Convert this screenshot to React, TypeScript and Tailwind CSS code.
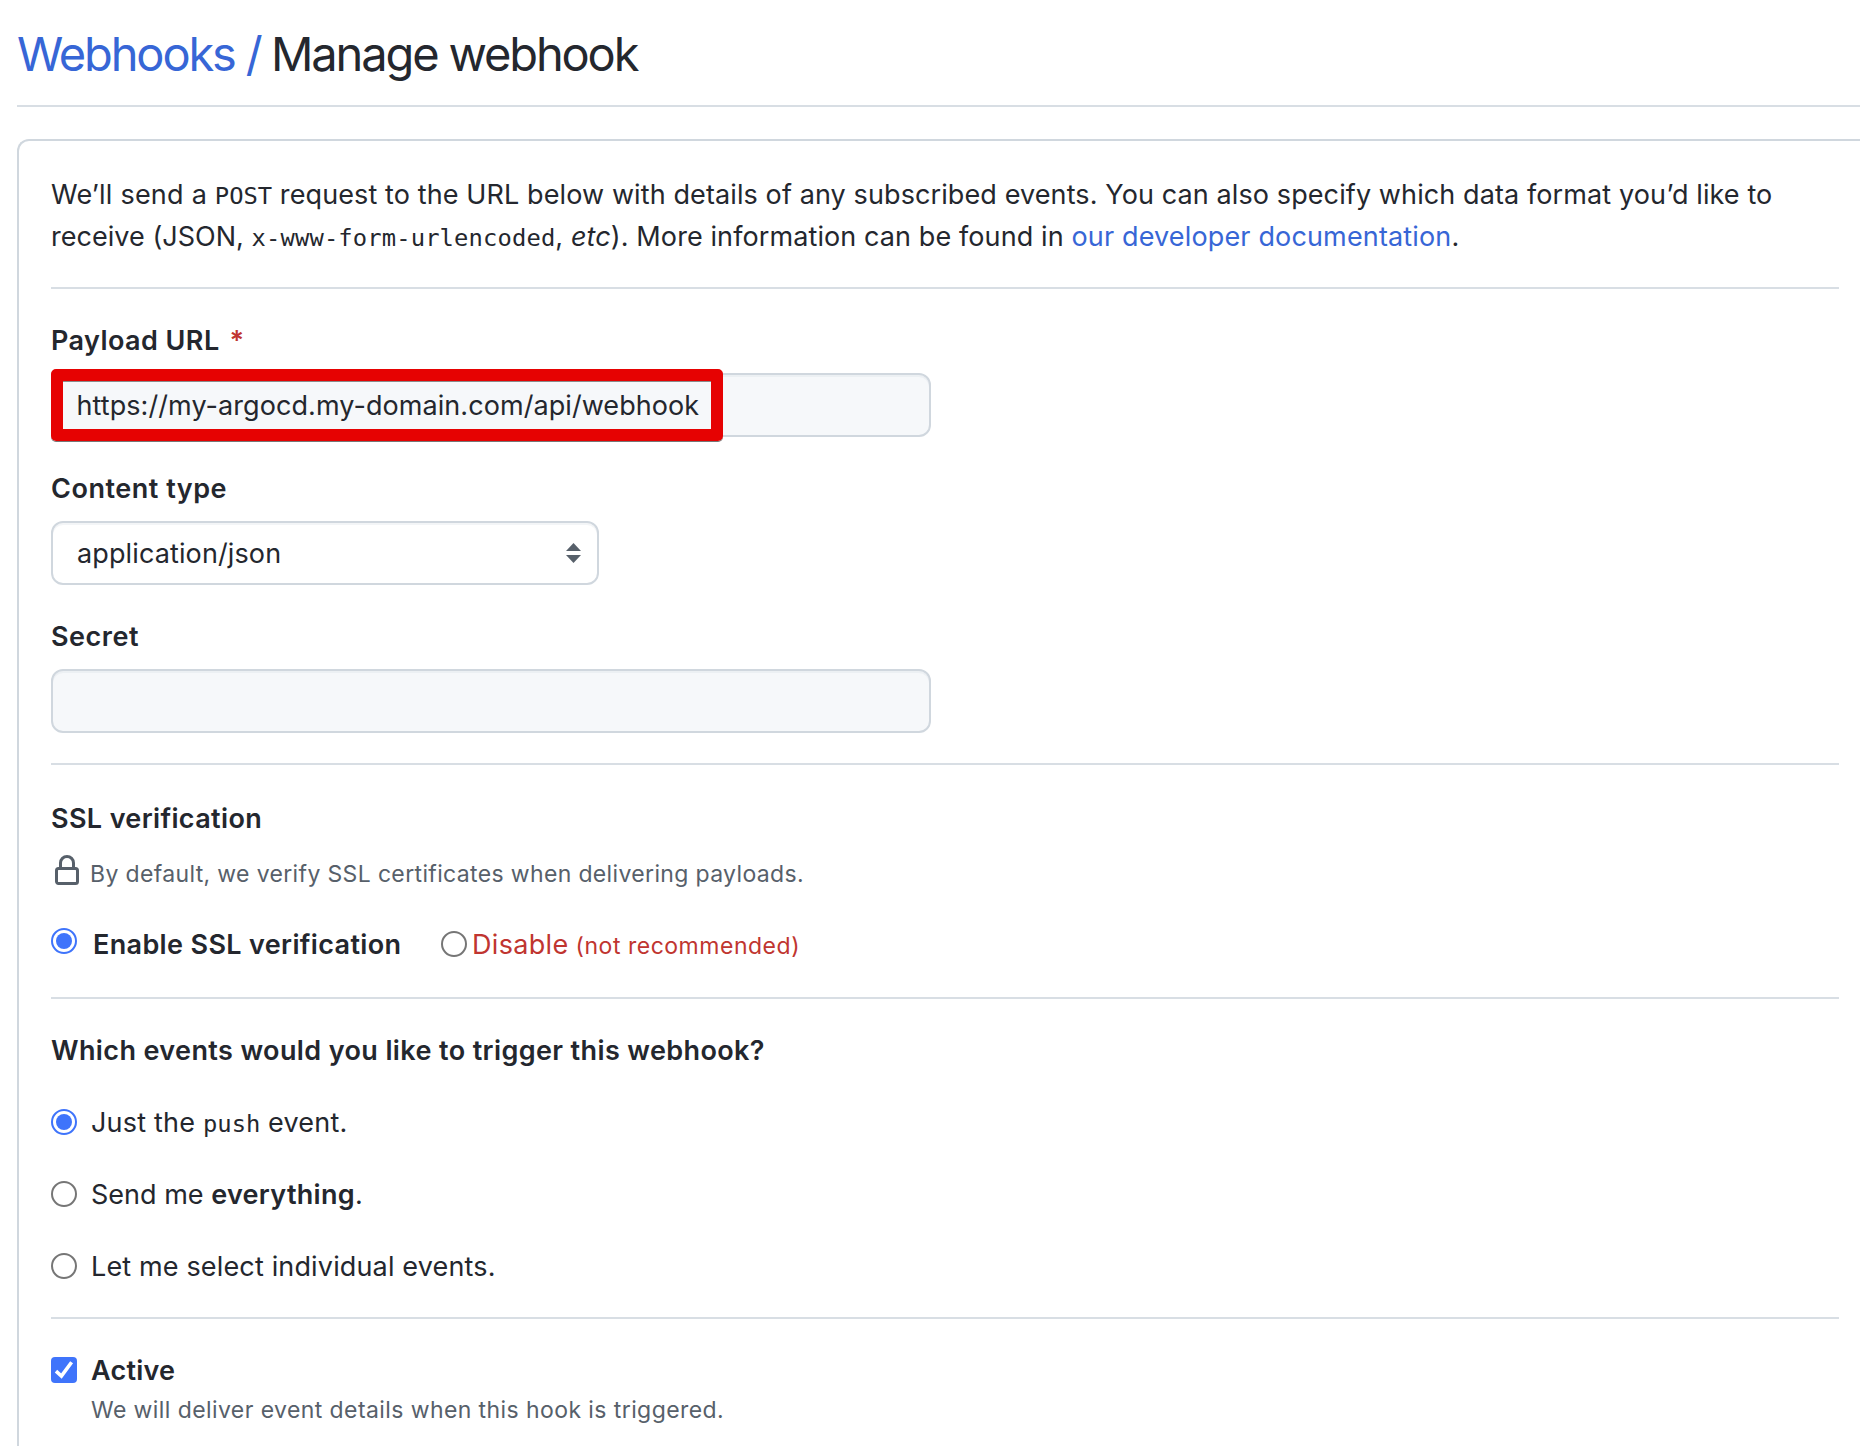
import type { ReactNode } from "react";

function Radio({ checked = false, className = "" }: { checked?: boolean; className?: string }) {
  return (
    <span
      role="radio"
      aria-checked={checked}
      className={`flex size-[26px] shrink-0 items-center justify-center rounded-full border-2 bg-white ${
        checked ? "border-[#3f74fb]" : "border-[#767676]"
      } ${className}`}
    >
      {checked && <span className="size-4 rounded-full bg-[#3f74fb]" />}
    </span>
  );
}

function Label({ children, className = "" }: { children: ReactNode; className?: string }) {
  return <div className={`font-semibold whitespace-nowrap ${className}`}>{children}</div>;
}

function Divider({ className = "" }: { className?: string }) {
  return <hr className={`border-0 h-[2px] shrink-0 bg-[#d8dee4] ${className}`} />;
}

function Code({ children, className = "" }: { children: ReactNode; className?: string }) {
  return (
    <code className={`font-['DejaVu_Sans_Mono',monospace] text-[23.8px] leading-none ${className}`}>{children}</code>
  );
}

const fieldClass =
  "h-16 rounded-xl border-2 border-[#d0d7de] shadow-[inset_0_2px_0_rgba(208,215,222,0.25)] outline-none";

export default function App() {
  return (
    <div className="flex h-[1446px] w-full flex-col overflow-hidden bg-white pl-[17px] font-['Inter',sans-serif] text-[27px] leading-[44px] text-[#24272e]">
      <header className="border-b-2 border-[#d8dee4] pt-[18px] pb-[15px]">
        <h1 className="flex text-[47px] leading-[72px] tracking-[-2.14px] whitespace-nowrap">
          <a className="text-[#3766d6]">Webhooks</a>
          <a className="ml-[11px] text-[#3766d6]">/</a>
          <span className="ml-[10.5px]">Manage webhook</span>
        </h1>
      </header>

      <main className="mt-8 flex flex-1 flex-col rounded-tl-xl border-t-2 border-l-2 border-[#d0d7de] pt-8 pr-[21px] pl-8">
        <p className="pt-px leading-[42px] whitespace-nowrap">
          <span className="tracking-[0.23px]">We’ll send a </span>
          <Code>POST</Code>
          <span className="tracking-[0.105px]">
            {" "}
            request to the URL below with details of any subscribed events. You can also specify which data format
            you’d like to
          </span>
          <br />
          <span className="tracking-[0.03px]">receive (JSON, </span>
          <Code className="tracking-[0.14px]">x-www-form-urlencoded</Code>
          <span className="tracking-[0.1px]">
            , <em>etc</em>). More information can be found in{" "}
          </span>
          <a className="tracking-[0.15px] text-[#3766d6]">our developer documentation</a>.
        </p>

        <Divider className="mt-[29px]" />

        <Label className="mt-[30px] tracking-[0.43px]">
          Payload URL<span className="ml-[10px] text-[#c03530]">*</span>
        </Label>
        <div className="relative mt-2.5 flex">
          <input
            readOnly
            value="https://my-argocd.my-domain.com/api/webhook"
            className={`${fieldClass} w-[880px] bg-[#f6f8fa] pl-[23.5px] tracking-[0.07px]`}
          />
          <div className="pointer-events-none absolute -top-1 left-0 h-[72px] w-[672px] rounded-[5px] border-12 border-[#e60202] shadow-[0_1px_0_#777,inset_0_1px_0_#8a8a8a]" />
        </div>

        <Label className="mt-[30px] tracking-[0.53px]">Content type</Label>
        <div className={`${fieldClass} mt-2.5 flex w-[548px] items-center justify-between bg-white pr-4 pl-6`}>
          <span className="pt-0.5 tracking-[0.12px]">application/json</span>
          <svg width="15" height="20" viewBox="0 0 15 20" fill="#57606a">
            <path d="M7.5 0 15 8H0z" />
            <path d="M0 12h15l-7.5 8z" />
          </svg>
        </div>

        <Label className="mt-[30px] tracking-[0.53px]">Secret</Label>
        <input readOnly value="" className={`${fieldClass} mt-2.5 w-[880px] bg-[#f6f8fa]`} />

        <Divider className="mt-[30px]" />

        <Label className="mt-8 tracking-[0.36px]">SSL verification</Label>
        <div className="mt-3.5 flex text-[23px] leading-[38px] tracking-[0.35px] text-[#57606a]">
          <svg width="32" height="32" viewBox="0 0 16 16" fill="currentColor">
            <path
              fillRule="evenodd"
              d="M4 4v2h-.25A1.75 1.75 0 002 7.75v5.5c0 .966.784 1.75 1.75 1.75h8.5A1.75 1.75 0 0014 13.25v-5.5A1.75 1.75 0 0012.25 6H12V4a4 4 0 10-8 0zm6.5 2V4a2.5 2.5 0 10-5 0v2h5zM12 7.5h.25a.25.25 0 01.25.25v5.5a.25.25 0 01-.25.25h-8.5a.25.25 0 01-.25-.25v-5.5a.25.25 0 01.25-.25H12z"
            />
          </svg>
          <span className="ml-[7px] whitespace-nowrap">
            By default, we verify SSL certificates when delivering payloads.
          </span>
        </div>
        <div className="mt-[30px] flex items-start whitespace-nowrap">
          <Radio checked className="mt-[5px]" />
          <span className="ml-4 w-[308px] font-semibold tracking-[0.35px]">Enable SSL verification</span>
          <Radio className="mt-2 ml-[40px]" />
          <span className="ml-[5px] text-[#c03530]">
            <span className="tracking-[0.33px]">Disable</span>
            <span className="ml-[7px] text-[23px] leading-none tracking-[0.52px]">(not recommended)</span>
          </span>
        </div>

        <Divider className="mt-[30px]" />

        <Label className="mt-[30px] tracking-[0.385px]">Which events would you like to trigger this webhook?</Label>
        <div className="mt-7 flex flex-col gap-7 whitespace-nowrap">
          <div className="flex items-start">
            <Radio checked className="mt-2" />
            <span className="ml-[14px] tracking-[0.2px]">
              Just the <Code className="tracking-normal">push</Code> event.
            </span>
          </div>
          <div className="flex items-start">
            <Radio className="mt-2" />
            <span className="ml-[14px]">
              Send me <b className="font-semibold tracking-[0.3px]">everything</b>.
            </span>
          </div>
          <div className="flex items-start">
            <Radio className="mt-2" />
            <span className="ml-[14px] tracking-[0.15px]">Let me select individual events.</span>
          </div>
        </div>

        <Divider className="mt-7" />

        <div className="mt-[30px] flex items-start whitespace-nowrap">
          <span
            role="checkbox"
            aria-checked="true"
            className="mt-2 flex size-[26px] shrink-0 items-center justify-center rounded-[4px] bg-[#3f74fb]"
          >
            <svg width="26" height="26" viewBox="0 0 26 26" fill="none" stroke="#fff" strokeWidth="3.6">
              <path d="M5 14.2 10.4 19 20.6 5.2" />
            </svg>
          </span>
          <div className="ml-[14px]">
            <div className="font-semibold tracking-[0.22px]">Active</div>
            <div className="text-[23px] leading-[34px] tracking-[0.414px] text-[#57606a]">
              We will deliver event details when this hook is triggered.
            </div>
          </div>
        </div>
      </main>
    </div>
  );
}
